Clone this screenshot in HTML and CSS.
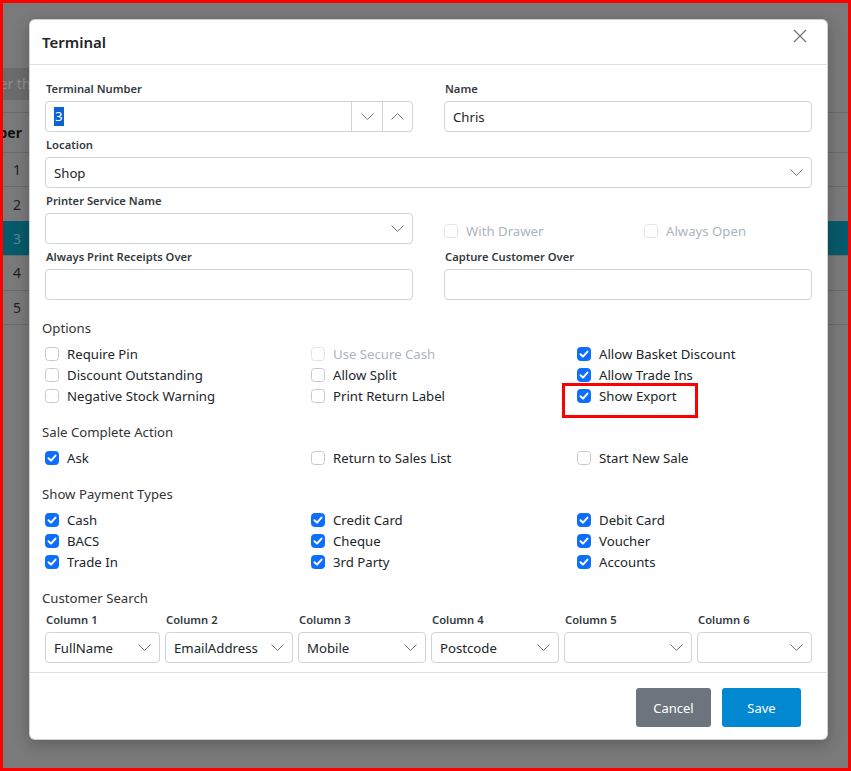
FILE: index.html
```html
<!DOCTYPE html>
<html lang="en">
<head>
<meta charset="utf-8">
<title>Terminal</title>
<link rel="stylesheet" href="styles.css">
</head>
<body>
<div class="frame">
  <div class="page">
    <div class="search">Filter this list...</div>
    <div class="table">
      <div class="trow thead"><div class="numcell">Number</div></div>
      <div class="trow"><div class="numcell">1</div></div>
      <div class="trow"><div class="numcell">2</div></div>
      <div class="trow active"><div class="numcell">3</div></div>
      <div class="trow"><div class="numcell">4</div></div>
      <div class="trow"><div class="numcell">5</div></div>
      <div class="trow"></div>
    </div>
  </div>

  <div class="modal">
    <div class="modal-header">
      <h5 class="modal-title">Terminal</h5>
      <button class="close" type="button" aria-label="Close">
        <svg width="14" height="14" viewBox="0 0 14 14"><path d="M1 1L13 13M13 1L1 13" stroke="#6c757d" stroke-width="1.2" fill="none"/></svg>
      </button>
    </div>

    <div class="modal-body">
      <div class="form-grid">
        <div class="field">
          <label>Terminal Number</label>
          <div class="control spinner">
            <span class="val"><span class="sel">3</span></span>
            <span class="spin-btn"><svg width="13" height="7" viewBox="0 0 13 7"><path d="M0.5 0.5L6.5 6.5L12.5 0.5" stroke="#6c757d" stroke-width="1" fill="none"/></svg></span>
            <span class="spin-btn last"><svg width="13" height="7" viewBox="0 0 13 7"><path d="M0.5 6.5L6.5 0.5L12.5 6.5" stroke="#6c757d" stroke-width="1" fill="none"/></svg></span>
          </div>
        </div>
        <div class="field">
          <label>Name</label>
          <div class="control">Chris</div>
        </div>
        <div class="field span2">
          <label>Location</label>
          <div class="control select"><span class="txt">Shop</span><svg width="13" height="7" viewBox="0 0 13 7"><path d="M0.5 0.5L6.5 6.5L12.5 0.5" stroke="#6c757d" stroke-width="1" fill="none"/></svg></div>
        </div>
        <div class="field">
          <label>Printer Service Name</label>
          <div class="control select"><span class="txt"></span><svg width="13" height="7" viewBox="0 0 13 7"><path d="M0.5 0.5L6.5 6.5L12.5 0.5" stroke="#6c757d" stroke-width="1" fill="none"/></svg></div>
        </div>
        <div class="check-pair">
          <div class="check disabled"><span class="box"></span>With Drawer</div>
          <div class="check disabled"><span class="box"></span>Always Open</div>
        </div>
        <div class="field">
          <label>Always Print Receipts Over</label>
          <div class="control"></div>
        </div>
        <div class="field">
          <label>Capture Customer Over</label>
          <div class="control"></div>
        </div>
      </div>

      <div class="section-title first">Options</div>
      <div class="check-grid">
        <div class="check"><span class="box"></span>Require Pin</div>
        <div class="check disabled"><span class="box"></span>Use Secure Cash</div>
        <div class="check"><span class="box on"><svg width="14" height="14" viewBox="0 0 14 14"><path d="M3.5 7.2L6 9.6L10.5 4.6" stroke="#fff" stroke-width="2" fill="none" stroke-linecap="round" stroke-linejoin="round"/></svg></span>Allow Basket Discount</div>
        <div class="check"><span class="box"></span>Discount Outstanding</div>
        <div class="check"><span class="box"></span>Allow Split</div>
        <div class="check"><span class="box on"><svg width="14" height="14" viewBox="0 0 14 14"><path d="M3.5 7.2L6 9.6L10.5 4.6" stroke="#fff" stroke-width="2" fill="none" stroke-linecap="round" stroke-linejoin="round"/></svg></span>Allow Trade Ins</div>
        <div class="check"><span class="box"></span>Negative Stock Warning</div>
        <div class="check"><span class="box"></span>Print Return Label</div>
        <div class="check hl"><span class="box on"><svg width="14" height="14" viewBox="0 0 14 14"><path d="M3.5 7.2L6 9.6L10.5 4.6" stroke="#fff" stroke-width="2" fill="none" stroke-linecap="round" stroke-linejoin="round"/></svg></span>Show Export<span class="annot"></span></div>
      </div>

      <div class="section-title">Sale Complete Action</div>
      <div class="check-grid">
        <div class="check"><span class="box on"><svg width="14" height="14" viewBox="0 0 14 14"><path d="M3.5 7.2L6 9.6L10.5 4.6" stroke="#fff" stroke-width="2" fill="none" stroke-linecap="round" stroke-linejoin="round"/></svg></span>Ask</div>
        <div class="check"><span class="box"></span>Return to Sales List</div>
        <div class="check"><span class="box"></span>Start New Sale</div>
      </div>

      <div class="section-title">Show Payment Types</div>
      <div class="check-grid">
        <div class="check"><span class="box on"><svg width="14" height="14" viewBox="0 0 14 14"><path d="M3.5 7.2L6 9.6L10.5 4.6" stroke="#fff" stroke-width="2" fill="none" stroke-linecap="round" stroke-linejoin="round"/></svg></span>Cash</div>
        <div class="check"><span class="box on"><svg width="14" height="14" viewBox="0 0 14 14"><path d="M3.5 7.2L6 9.6L10.5 4.6" stroke="#fff" stroke-width="2" fill="none" stroke-linecap="round" stroke-linejoin="round"/></svg></span>Credit Card</div>
        <div class="check"><span class="box on"><svg width="14" height="14" viewBox="0 0 14 14"><path d="M3.5 7.2L6 9.6L10.5 4.6" stroke="#fff" stroke-width="2" fill="none" stroke-linecap="round" stroke-linejoin="round"/></svg></span>Debit Card</div>
        <div class="check"><span class="box on"><svg width="14" height="14" viewBox="0 0 14 14"><path d="M3.5 7.2L6 9.6L10.5 4.6" stroke="#fff" stroke-width="2" fill="none" stroke-linecap="round" stroke-linejoin="round"/></svg></span>BACS</div>
        <div class="check"><span class="box on"><svg width="14" height="14" viewBox="0 0 14 14"><path d="M3.5 7.2L6 9.6L10.5 4.6" stroke="#fff" stroke-width="2" fill="none" stroke-linecap="round" stroke-linejoin="round"/></svg></span>Cheque</div>
        <div class="check"><span class="box on"><svg width="14" height="14" viewBox="0 0 14 14"><path d="M3.5 7.2L6 9.6L10.5 4.6" stroke="#fff" stroke-width="2" fill="none" stroke-linecap="round" stroke-linejoin="round"/></svg></span>Voucher</div>
        <div class="check"><span class="box on"><svg width="14" height="14" viewBox="0 0 14 14"><path d="M3.5 7.2L6 9.6L10.5 4.6" stroke="#fff" stroke-width="2" fill="none" stroke-linecap="round" stroke-linejoin="round"/></svg></span>Trade In</div>
        <div class="check"><span class="box on"><svg width="14" height="14" viewBox="0 0 14 14"><path d="M3.5 7.2L6 9.6L10.5 4.6" stroke="#fff" stroke-width="2" fill="none" stroke-linecap="round" stroke-linejoin="round"/></svg></span>3rd Party</div>
        <div class="check"><span class="box on"><svg width="14" height="14" viewBox="0 0 14 14"><path d="M3.5 7.2L6 9.6L10.5 4.6" stroke="#fff" stroke-width="2" fill="none" stroke-linecap="round" stroke-linejoin="round"/></svg></span>Accounts</div>
      </div>

      <div class="section-title">Customer Search</div>
      <div class="cols">
        <div class="field">
          <label class="col-label">Column 1</label>
          <div class="control select"><span class="txt">FullName</span><svg width="13" height="7" viewBox="0 0 13 7"><path d="M0.5 0.5L6.5 6.5L12.5 0.5" stroke="#6c757d" stroke-width="1" fill="none"/></svg></div>
        </div>
        <div class="field">
          <label class="col-label">Column 2</label>
          <div class="control select"><span class="txt">EmailAddress</span><svg width="13" height="7" viewBox="0 0 13 7"><path d="M0.5 0.5L6.5 6.5L12.5 0.5" stroke="#6c757d" stroke-width="1" fill="none"/></svg></div>
        </div>
        <div class="field">
          <label class="col-label">Column 3</label>
          <div class="control select"><span class="txt">Mobile</span><svg width="13" height="7" viewBox="0 0 13 7"><path d="M0.5 0.5L6.5 6.5L12.5 0.5" stroke="#6c757d" stroke-width="1" fill="none"/></svg></div>
        </div>
        <div class="field">
          <label class="col-label">Column 4</label>
          <div class="control select"><span class="txt">Postcode</span><svg width="13" height="7" viewBox="0 0 13 7"><path d="M0.5 0.5L6.5 6.5L12.5 0.5" stroke="#6c757d" stroke-width="1" fill="none"/></svg></div>
        </div>
        <div class="field">
          <label class="col-label">Column 5</label>
          <div class="control select"><span class="txt"></span><svg width="13" height="7" viewBox="0 0 13 7"><path d="M0.5 0.5L6.5 6.5L12.5 0.5" stroke="#6c757d" stroke-width="1" fill="none"/></svg></div>
        </div>
        <div class="field">
          <label class="col-label">Column 6</label>
          <div class="control select"><span class="txt"></span><svg width="13" height="7" viewBox="0 0 13 7"><path d="M0.5 0.5L6.5 6.5L12.5 0.5" stroke="#6c757d" stroke-width="1" fill="none"/></svg></div>
        </div>
      </div>
    </div>

    <div class="modal-footer">
      <button class="btn btn-cancel" type="button">Cancel</button>
      <button class="btn btn-save" type="button">Save</button>
    </div>
  </div>
</div>
</body>
</html>
```

FILE: styles.css
```css
* { box-sizing: border-box; }
html, body { margin: 0; padding: 0; }
body {
  font-family: "Noto Sans", "Open Sans", sans-serif;
  color: #212529;
}

.frame {
  position: relative;
  width: 851px;
  height: 771px;
  border: 3px solid #ff0000;
  overflow: hidden;
  background: #7a7a7a;
}

/* dimmed page behind the dialog */
.page { padding-top: 65px; }
.search {
  width: 380px;
  height: 32px;
  background: #6c6c6c;
  color: #8e8e8e;
  font-size: 14px;
  line-height: 32px;
  text-indent: -23px;
  white-space: nowrap;
  overflow: hidden;
}
.table { margin-top: 12px; }
.trow {
  height: 34.4px;
  border-top: 1px solid #6a6a6a;
  display: flex;
  align-items: center;
}
.trow.thead { height: 40px; }
.trow.active { background: #075a6b; border-top-color: #075a6b; }
.numcell {
  width: 18px;
  display: flex;
  justify-content: flex-end;
  font-size: 14px;
  color: #1f1f1f;
  white-space: nowrap;
}
.thead .numcell { width: 19px; font-weight: 700; color: #141414; }
.active .numcell { color: #4f8c96; }

/* dialog */
.modal {
  position: absolute;
  left: 26px;
  top: 16px;
  width: 799px;
  background: #fff;
  border: 1px solid rgba(0, 0, 0, 0.18);
  border-radius: 6px;
  box-shadow: 0 4px 16px rgba(0, 0, 0, 0.25);
}
.modal-header {
  height: 45px;
  border-bottom: 1px solid #dee2e6;
  display: flex;
  align-items: center;
  justify-content: space-between;
  padding: 0 20px 0 12px;
}
.modal-title {
  margin: 0;
  font-size: 15px;
  font-weight: 600;
  color: #212529;
}
.close {
  align-self: flex-start;
  margin-top: 9px;
  padding: 0;
  border: 0;
  background: none;
  width: 14px;
  height: 14px;
  display: flex;
}

.modal-body { padding: 11px 15px 9px; }

.form-grid {
  display: grid;
  grid-template-columns: 368px 368px;
  column-gap: 31px;
}
.span2 { grid-column: span 2; }
.field label {
  display: block;
  font-size: 11.2px;
  font-weight: 600;
  line-height: 16px;
  margin: 5px 0 4px 1px;
  color: #343a40;
}
.field label.col-label { margin: 4px 0 4px 1px; }

.control {
  height: 31px;
  border: 1px solid #ced4da;
  border-radius: 4px;
  display: flex;
  align-items: center;
  padding: 0 8px;
  font-size: 13.2px;
  color: #212529;
  white-space: nowrap;
  overflow: hidden;
}
.select { padding-right: 8px; }
.select .txt { flex: 1; }
.select svg { flex: none; }

.spinner { padding: 0; }
.spinner .val { flex: 1; padding-left: 8px; display: flex; align-items: center; }
.sel { background: #0b63d6; color: #fff; line-height: 19px; padding: 0 1px; }
.spin-btn {
  width: 31px;
  height: 100%;
  border-left: 1px solid #ced4da;
  display: flex;
  align-items: center;
  justify-content: center;
}
.spin-btn.last { width: 30px; }

.check-pair {
  align-self: end;
  display: flex;
  height: 21px;
  margin-bottom: 3px;
}
.check-pair .check { flex: none; width: 200px; }

.section-title {
  font-size: 13.2px;
  line-height: 20px;
  margin: 16px 0 0 -3px;
  color: #333;
}
.section-title.first { margin-top: 18px; }

.check-grid {
  display: grid;
  grid-template-columns: 266px 266px 1fr;
  grid-auto-rows: 21px;
  margin-top: 5px;
}
.check {
  display: flex;
  align-items: center;
  gap: 8px;
  font-size: 13.2px;
  color: #212529;
  white-space: nowrap;
}
.box {
  width: 14px;
  height: 14px;
  flex: none;
  border: 1px solid #c5cad0;
  border-radius: 3.5px;
  background: #fff;
  display: flex;
  align-items: center;
  justify-content: center;
  overflow: hidden;
}
.box.on { background: #0d6efd; border-color: #0d6efd; }
.box svg { flex: none; }
.check.disabled { color: #adb5bd; }
.check.disabled .box { border-color: #e1e4e8; }

.check.hl { position: relative; }
.annot {
  position: absolute;
  left: -15px;
  top: -2px;
  width: 136px;
  height: 35px;
  border: 3px solid #ff0000;
}

.cols {
  display: grid;
  grid-template-columns: 115px repeat(4, 128px) 1fr;
  column-gap: 5px;
}

.modal-footer {
  border-top: 1px solid #dee2e6;
  padding: 15px 26px 12px;
  display: flex;
  justify-content: flex-end;
  gap: 11px;
}
.btn {
  height: 39px;
  border: 0;
  border-radius: 3px;
  color: #fff;
  font-family: "Noto Sans", "Open Sans", sans-serif;
  font-size: 13px;
  padding: 0;
}
.btn-cancel { width: 75px; background: #6c757d; }
.btn-save { width: 79px; background: #0288d1; }
```
